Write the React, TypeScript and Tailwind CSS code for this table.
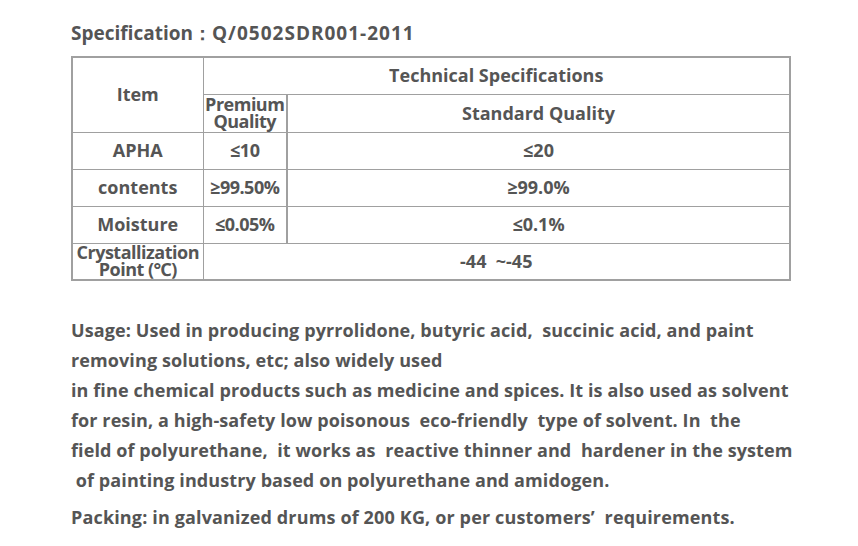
const rows = [
  { item: 'APHA', premium: '≤10', standard: '≤20' },
  { item: 'contents', premium: '≥99.50%', standard: '≥99.0%' },
  { item: 'Moisture', premium: '≤0.05%', standard: '≤0.1%' },
];

const usageLines = [
  'Usage: Used in producing pyrrolidone, butyric acid,  succinic acid, and paint',
  'removing solutions, etc; also widely used',
  'in fine chemical products such as medicine and spices. It is also used as solvent',
  'for resin, a high-safety low poisonous  eco-friendly  type of solvent. In  the',
  'field of polyurethane,  it works as  reactive thinner and  hardener in the system',
  ' of painting industry based on polyurethane and amidogen.',
];

const App = () => {
  return (
    <div className="w-[858px] h-[546px] bg-white pl-[71px] pt-[18px] text-[#555] font-bold text-[18px] font-['Open_Sans','Noto_Sans',sans-serif]">
      {/* Title */}
      <div className="h-[30px] leading-[30px] whitespace-pre text-[19px]">
        Specification：<span className="tracking-[1px]">Q/0502SDR001-2011</span>
      </div>

      {/* Spec table */}
      <table className="mt-[8px] w-[720px] table-fixed border-collapse border-2 border-[#a0a0a0] text-center">
        <colgroup>
          <col className="w-[131px]" />
          <col className="w-[84px]" />
          <col />
        </colgroup>
        <tbody>
          <tr className="h-[37px]">
            <td rowSpan={2} className="border border-[#a0a0a0] p-0">Item</td>
            <td colSpan={2} className="border border-[#a0a0a0] p-0">Technical Specifications</td>
          </tr>
          <tr className="h-[38px]">
            <td className="border border-r-2 border-[#a0a0a0] p-0 leading-[17px] whitespace-nowrap tracking-[-0.5px]">
              Premium
              <br />
              Quality
            </td>
            <td className="border border-[#a0a0a0] p-0">Standard Quality</td>
          </tr>
          {rows.map((row) => (
            <tr key={row.item} className="h-[37px]">
              <td className="border border-[#a0a0a0] p-0">{row.item}</td>
              <td className="border border-r-2 border-[#a0a0a0] p-0 whitespace-nowrap tracking-[-0.5px]">{row.premium}</td>
              <td className="border border-[#a0a0a0] p-0">{row.standard}</td>
            </tr>
          ))}
          <tr className="h-[37px]">
            <td className="border border-[#a0a0a0] p-0 leading-[17px] whitespace-nowrap tracking-[-0.5px]">
              Crystallization
              <br />
              Point (℃)
            </td>
            <td colSpan={2} className="border border-[#a0a0a0] p-0 whitespace-pre">-44  ~-45</td>
          </tr>
        </tbody>
      </table>

      {/* Usage */}
      <div className="mt-[34px] tracking-[0.1px]">
        {usageLines.map((line) => (
          <div key={line} className="h-[30px] leading-[30px] whitespace-pre">{line}</div>
        ))}
      </div>

      {/* Packing */}
      <div className="mt-[7px] h-[30px] leading-[30px] whitespace-pre tracking-[0.15px]">
        Packing: in galvanized drums of 200 KG, or per customers’  requirements.
      </div>
    </div>
  );
};

export default App;
